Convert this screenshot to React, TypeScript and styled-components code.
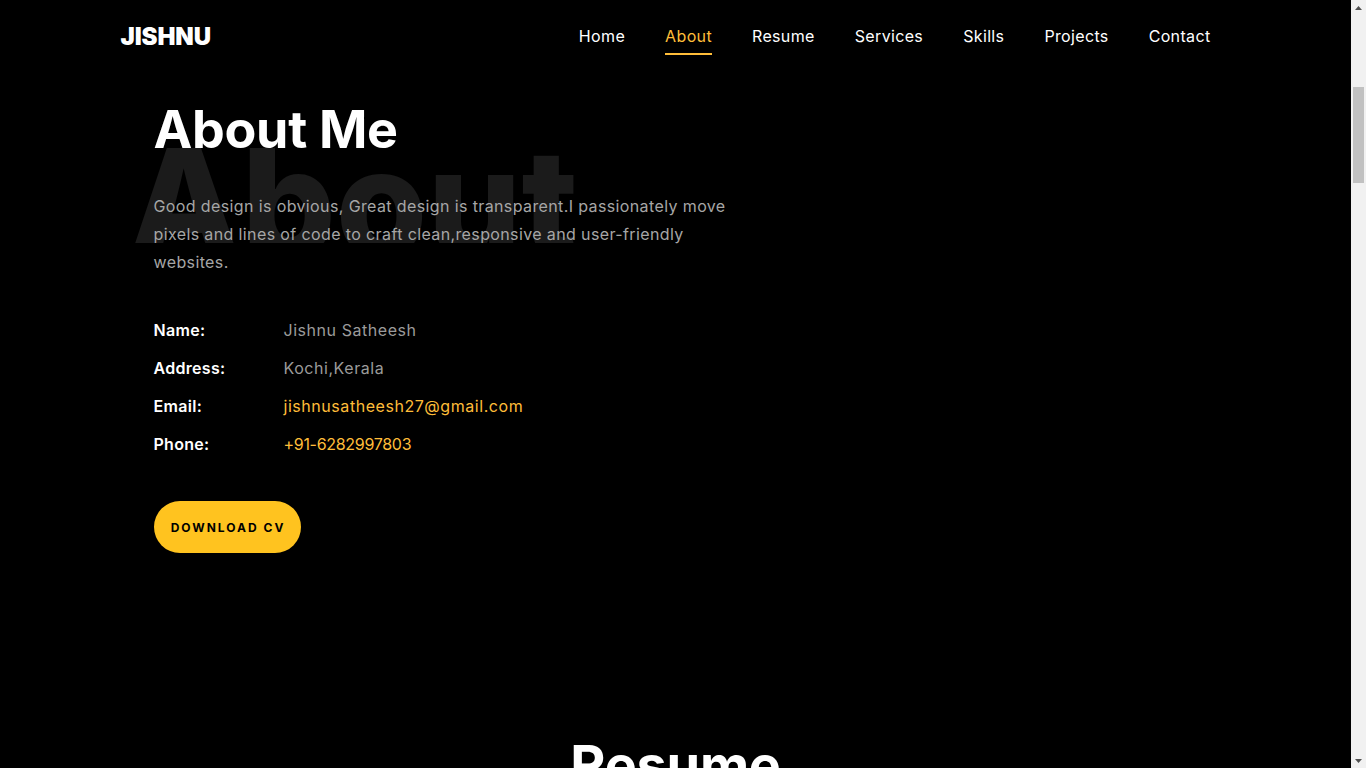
import React from "react";
import styled, { createGlobalStyle } from "styled-components";

const GlobalStyle = createGlobalStyle`
  html, body {
    margin: 0;
    padding: 0;
    background: #000;
  }
  body {
    font-family: "Inter", "Noto Sans", sans-serif;
    color: #fff;
    -webkit-font-smoothing: antialiased;
  }
  * { box-sizing: border-box; }
`;

const YELLOW = "#ffbd39";
const BUTTON_YELLOW = "#ffc31f";

const Layout = styled.div`
  display: flex;
  align-items: flex-start;
`;

const Main = styled.main`
  flex: 1;
  min-width: 0;
`;

const ScrollTrack = styled.aside`
  position: sticky;
  top: 0;
  width: 15px;
  height: 100vh;
  flex-shrink: 0;
  background: #f1f1f1;
  display: flex;
  flex-direction: column;
  align-items: center;
`;

const ScrollArrow = styled.div`
  height: 15px;
  width: 15px;
  display: flex;
  align-items: center;
  justify-content: center;
`;

const ScrollGap = styled.div<{ $h: number }>`
  height: ${(p) => p.$h}px;
  flex-shrink: 0;
`;

const ScrollFill = styled.div`
  flex: 1;
`;

const ScrollThumb = styled.div`
  width: 11px;
  height: 96px;
  background: #c1c1c1;
  flex-shrink: 0;
`;

const Header = styled.header`
  height: 72px;
  display: flex;
  align-items: center;
`;

const Container = styled.div`
  width: 1140px;
  margin: 0 auto;
  padding: 0 15px;
`;

const HeaderInner = styled(Container)`
  display: flex;
  align-items: center;
  justify-content: space-between;
`;

const Logo = styled.a`
  font-size: 24px;
  font-weight: 900;
  letter-spacing: -0.1px;
  color: #fff;
  text-decoration: none;
  line-height: 1;
  margin-top: 2px;
`;

const NavList = styled.nav`
  display: flex;
  align-items: center;
`;

const NavLink = styled.a<{ $active?: boolean }>`
  position: relative;
  padding: 0 20px;
  font-size: 16px;
  font-weight: 400;
  line-height: 24px;
  letter-spacing: 0.35px;
  color: ${(p) => (p.$active ? YELLOW : "#fff")};
  text-decoration: none;

  &::after {
    content: "";
    position: absolute;
    left: 20px;
    right: 20px;
    bottom: -7px;
    height: 2px;
    background: ${YELLOW};
    display: ${(p) => (p.$active ? "block" : "none")};
  }
`;

const AboutSection = styled.section`
  padding: 28px 0 0 33px;
  height: 663px;
`;

const Content = styled.div`
  width: 600px;
`;

const HeadingWrap = styled.div`
  position: relative;
`;

const BigText = styled.div`
  position: absolute;
  top: 29px;
  left: -26px;
  height: 114px;
  overflow: hidden;
  font-size: 148px;
  font-weight: 800;
  line-height: 1;
  letter-spacing: 0;
  color: #1b1b1b;
  white-space: nowrap;
  z-index: 0;
  pointer-events: none;
`;

const Heading = styled.h2`
  position: relative;
  z-index: 1;
  margin: 0;
  font-size: 52px;
  font-weight: 700;
  line-height: 60px;
  letter-spacing: -0.3px;
  color: #fff;
`;

const Lead = styled.p`
  position: relative;
  z-index: 1;
  margin: 32px 0 0;
  font-size: 16px;
  line-height: 28px;
  letter-spacing: 0.38px;
  color: #a6a6a6;
  max-width: 590px;
`;

const InfoList = styled.ul`
  list-style: none;
  margin: 42px 0 0;
  padding: 0;
  display: flex;
  flex-direction: column;
  gap: 14px;
`;

const InfoRow = styled.li`
  display: flex;
  align-items: center;
  font-size: 16px;
  line-height: 24px;
  letter-spacing: 0.3px;
`;

const InfoLabel = styled.span`
  width: 130px;
  font-weight: 600;
  color: #fff;
`;

const InfoValue = styled.span<{ $accent?: boolean; $tight?: boolean }>`
  letter-spacing: ${(p) => (p.$tight ? "-0.3px" : "0.55px")};
  color: ${(p) => (p.$accent ? YELLOW : "#9b9b9b")};
`;

const DownloadButton = styled.a`
  display: inline-flex;
  align-items: center;
  justify-content: center;
  margin-top: 45px;
  width: 147px;
  height: 52px;
  border-radius: 26px;
  background: ${BUTTON_YELLOW};
  color: #000;
  font-size: 12px;
  font-weight: 700;
  letter-spacing: 2px;
  text-decoration: none;
  padding-left: 2px;
`;

const ResumeSection = styled.section`
  padding-bottom: 120px;
`;

const CenterHeading = styled.h2`
  margin: 0;
  text-align: center;
  font-size: 54px;
  font-weight: 700;
  line-height: 60px;
  letter-spacing: -0.3px;
  color: #fff;
`;

const ResumeGrid = styled.div`
  display: grid;
  grid-template-columns: 1fr 1fr;
  gap: 30px;
  margin-top: 60px;
`;

const ResumeCard = styled.div`
  background: #1a1a1a;
  padding: 30px;
`;

const CardDate = styled.span`
  font-size: 26px;
  font-weight: 700;
  color: ${YELLOW};
`;

const CardTitle = styled.h3`
  margin: 10px 0 6px;
  font-size: 22px;
  color: #fff;
`;

const CardText = styled.p`
  margin: 0;
  font-size: 16px;
  line-height: 26px;
  color: #9b9b9b;
`;

const navItems = ["Home", "About", "Resume", "Services", "Skills", "Projects", "Contact"];

const info: { label: string; value: string; accent?: boolean; tight?: boolean }[] = [
  { label: "Name:", value: "Jishnu Satheesh" },
  { label: "Address:", value: "Kochi,Kerala" },
  { label: "Email:", value: "jishnusatheesh27@gmail.com", accent: true },
  { label: "Phone:", value: "+91-6282997803", accent: true, tight: true },
];

const resume = [
  { date: "2019-2023", title: "Bachelor of Technology", text: "Computer Science and Engineering" },
  { date: "2017-2019", title: "Higher Secondary", text: "Computer Science" },
  { date: "2017", title: "Secondary School", text: "Kerala State Board" },
  { date: "2022", title: "Web Development", text: "Frontend and responsive design projects" },
];

function Triangle({ down }: { down?: boolean }) {
  return (
    <svg width="7" height="4" viewBox="0 0 7 4">
      <polygon points={down ? "0,0 7,0 3.5,4" : "0,4 7,4 3.5,0"} fill="#505050" />
    </svg>
  );
}

export default function App() {
  return (
    <>
      <GlobalStyle />
      <Layout>
        <Main>
          <Header>
            <HeaderInner>
              <Logo href="#">JISHNU</Logo>
              <NavList>
                {navItems.map((n) => (
                  <NavLink key={n} href="#" $active={n === "About"}>
                    {n}
                  </NavLink>
                ))}
              </NavList>
            </HeaderInner>
          </Header>

          <Container>
            <AboutSection>
              <Content>
                <HeadingWrap>
                  <BigText aria-hidden>About</BigText>
                  <Heading>About Me</Heading>
                  <Lead>
                    Good design is obvious, Great design is transparent.I passionately move pixels and lines of
                    code to craft clean,responsive and user-friendly websites.
                  </Lead>
                </HeadingWrap>
                <InfoList>
                  {info.map((i) => (
                    <InfoRow key={i.label}>
                      <InfoLabel>{i.label}</InfoLabel>
                      <InfoValue $accent={i.accent} $tight={i.tight}>
                        {i.value}
                      </InfoValue>
                    </InfoRow>
                  ))}
                </InfoList>
                <DownloadButton href="#">DOWNLOAD CV</DownloadButton>
              </Content>
            </AboutSection>
          </Container>

          <ResumeSection>
            <Container>
              <CenterHeading>Resume</CenterHeading>
              <ResumeGrid>
                {resume.map((r) => (
                  <ResumeCard key={r.title}>
                    <CardDate>{r.date}</CardDate>
                    <CardTitle>{r.title}</CardTitle>
                    <CardText>{r.text}</CardText>
                  </ResumeCard>
                ))}
              </ResumeGrid>
            </Container>
          </ResumeSection>
        </Main>
        <ScrollTrack aria-hidden>
          <ScrollArrow>
            <Triangle />
          </ScrollArrow>
          <ScrollGap $h={72} />
          <ScrollThumb />
          <ScrollFill />
          <ScrollArrow>
            <Triangle down />
          </ScrollArrow>
        </ScrollTrack>
      </Layout>
    </>
  );
}
